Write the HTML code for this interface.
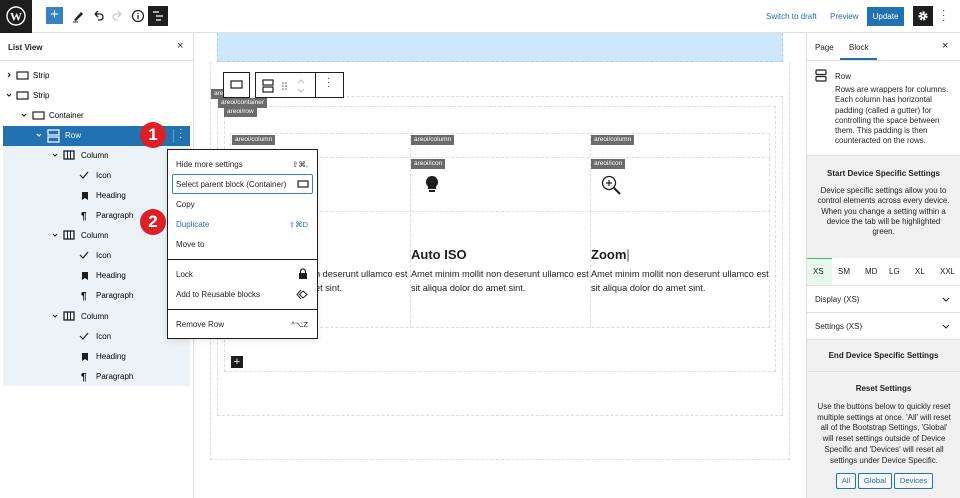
<!DOCTYPE html>
<html><head><meta charset="utf-8"><style>
*{box-sizing:border-box;margin:0;padding:0}
body{width:960px;height:498px;overflow:hidden;font-family:"Liberation Sans",Arial,sans-serif;background:#fff;position:relative;color:#1e1e1e}
.a{position:absolute}
.t{font-size:8px;white-space:nowrap}
.lab{position:absolute;background:#6b6b6b;color:#fff;font-size:6.5px;padding:1px 3px;line-height:8px}
.dash{position:absolute;border:1px dashed #ddd}
.mi{position:absolute;left:8px;font-size:8px;white-space:nowrap}
.ms{position:absolute;right:9px;font-size:7.5px}
</style></head><body>
<div class="a" style="left:0;top:0;width:960px;height:33px;border-bottom:1px solid #e0e0e0"></div>
<div class="a" style="left:0;top:0;width:32px;height:33px;background:#1e1e1e"></div>
<svg class="a" style="left:6px;top:6px" width="20" height="20" viewBox="0 0 20 20"><circle cx="10" cy="10" r="9" fill="none" stroke="#fff" stroke-width="1.4"/><text x="10" y="14.5" font-size="12" font-weight="bold" fill="#fff" text-anchor="middle" font-family="Liberation Serif">W</text></svg>
<div class="a" style="left:46px;top:7px;width:17px;height:17px;background:#3582c4;color:#fff;font-size:15px;line-height:16px;text-align:center">+</div>
<svg class="a" style="left:71px;top:9px" width="14" height="14"><path d="M3 11 L10 3 L12 5 L5 12Z" fill="#1e1e1e"/><path d="M2 13h5" stroke="#1e1e1e"/></svg>
<svg class="a" style="left:91px;top:9px" width="14" height="14"><path d="M4 5h5a3 3 0 010 6H7M4 5l3-3M4 5l3 3" stroke="#1e1e1e" fill="none" stroke-width="1.3"/></svg>
<svg class="a" style="left:111px;top:9px" width="14" height="14"><path d="M10 5H5a3 3 0 000 6h2M10 5L7 2M10 5L7 8" stroke="#ccc" fill="none" stroke-width="1.3"/></svg>
<svg class="a" style="left:131px;top:9px" width="14" height="14"><circle cx="7" cy="7" r="5.5" fill="none" stroke="#1e1e1e" stroke-width="1.2"/><path d="M7 6v4M7 4v1" stroke="#1e1e1e" stroke-width="1.3"/></svg>
<div class="a" style="left:148px;top:6px;width:20px;height:20px;background:#1e1e1e"></div>
<svg class="a" style="left:151px;top:9px" width="14" height="14"><path d="M2 3h6M5 7h7M5 11h5" stroke="#fff" stroke-width="1.3"/></svg>
<div class="a t" style="left:766px;top:12px;color:#2271b1">Switch to draft</div>
<div class="a t" style="left:830px;top:12px;color:#2271b1">Preview</div>
<div class="a" style="left:867px;top:7px;width:37px;height:19px;background:#2271b1;color:#fff;font-size:8px;line-height:19px;text-align:center">Update</div>
<div class="a" style="left:913px;top:6px;width:20px;height:20px;background:#1e1e1e"></div>
<svg class="a" style="left:917px;top:10px" width="12" height="12"><circle cx="6" cy="6" r="3.5" fill="none" stroke="#fff" stroke-width="2.2" stroke-dasharray="2 1.2"/><circle cx="6" cy="6" r="2.6" fill="#fff"/><circle cx="6" cy="6" r="1" fill="#1e1e1e"/></svg>
<div class="a" style="left:942px;top:8px;font-size:10px;line-height:5px;width:4px">·<br>·<br>·</div>

<div class="a" style="left:193px;top:33px;width:1px;height:465px;background:#e0e0e0"></div>
<div class="a" style="left:0;top:60px;width:193px;height:1px;background:#e0e0e0"></div>
<div class="a t" style="left:8px;top:43px;font-weight:bold">List View</div>
<div class="a" style="left:177px;top:40px;font-size:11px">×</div>
<div class="a" style="left:3px;top:146px;width:187px;height:240px;background:#ecf3f8"></div>
<div class="a" style="left:3px;top:126px;width:187px;height:20px;background:#2271b1"></div>
<div class="a" style="left:173px;top:129px;width:1px;height:14px;background:#5b9bd0"></div>
<div class="a" style="left:179px;top:128px;color:#fff;font-size:10px;line-height:4px">·<br>·<br>·</div>
<div class="a" style="left:140px;top:122px;width:26px;height:26px;border-radius:50%;background:#dd1f26;color:#fff;font-size:17px;font-weight:bold;text-align:center;line-height:26px">1</div>
<div class="a" style="left:140px;top:209px;width:26px;height:26px;border-radius:50%;background:#dd1f26;color:#fff;font-size:17px;font-weight:bold;text-align:center;line-height:26px">2</div>
<svg class="a" style="left:0;top:60px" width="193" height="330" font-family="Liberation Sans" font-size="8">
<g fill="none" stroke="#1e1e1e" stroke-width="1.2">
<path d="M8 13l2 2-2 2"/><rect x="17" y="12" width="11" height="7"/>
<path d="M7 34l2 2 2-2"/><rect x="17" y="32" width="11" height="7"/>
<path d="M22 54l2 2 2-2"/><rect x="33" y="52" width="11" height="7"/>
<path d="M37 74l2 2 2-2" stroke="#fff"/><rect x="48" y="70" width="11" height="5" stroke="#fff"/><rect x="48" y="77" width="11" height="5" stroke="#fff"/>
</g>
<text x="33" y="18">Strip</text><text x="33" y="38">Strip</text><text x="49" y="58">Container</text><text x="65" y="78" fill="#fff">Row</text>
<g id="col">
<path d="M53 94l2 2 2-2" fill="none" stroke="#1e1e1e"/><rect x="64" y="91" width="10" height="8" fill="none" stroke="#1e1e1e" stroke-width="1.3"/><path d="M67.5 91v8M70.5 91v8" stroke="#1e1e1e"/>
<text x="81" y="98">Column</text>
<path d="M80 115l3 3 5-6" fill="none" stroke="#1e1e1e" stroke-width="1.2"/><text x="96" y="118">Icon</text>
<path d="M82 132h6v8l-3-2-3 2z" fill="#1e1e1e"/><text x="96" y="138">Heading</text>
<text x="81" y="159" font-size="10" font-weight="bold">¶</text><text x="96" y="158">Paragraph</text>
</g>
<use href="#col" y="80"/><use href="#col" y="161"/>
</svg>

<div class="a" style="left:217px;top:33px;width:566px;height:29px;background:#cfe7fb;border:1px dashed #a7d0f0;border-top:none"></div>
<div class="dash" style="left:210px;top:62px;width:580px;height:398px;border-top:none"></div>
<div class="dash" style="left:217px;top:96px;width:566px;height:320px"></div>
<div class="dash" style="left:224px;top:106px;width:552px;height:266px"></div>
<div class="dash" style="left:230px;top:133px;width:540px;height:195px"></div>
<div class="dash" style="left:230px;top:157px;width:540px;height:55px;border-left:none;border-right:none"></div>
<div class="a" style="left:410px;top:133px;width:0;height:195px;border-left:1px dashed #ddd"></div>
<div class="a" style="left:590px;top:133px;width:0;height:195px;border-left:1px dashed #ddd"></div>
<div class="lab" style="left:211px;top:89px">areo</div>
<div class="lab" style="left:218px;top:98px">areoi/container</div>
<div class="lab" style="left:224px;top:107px">areoi/row</div>
<div class="lab" style="left:232px;top:135px">areoi/column</div>
<div class="lab" style="left:411px;top:135px">areoi/column</div>
<div class="lab" style="left:591px;top:135px">areoi/column</div>
<div class="lab" style="left:411px;top:159px">areoi/icon</div>
<div class="lab" style="left:591px;top:159px">areoi/icon</div>
<svg class="a" style="left:424px;top:175px" width="16" height="20"><path d="M8 1a6 6 0 00-4 10.5V14h8v-2.5A6 6 0 008 1z" fill="#1e1e1e"/><rect x="5" y="15" width="6" height="2" fill="#1e1e1e"/></svg>
<svg class="a" style="left:600px;top:174px" width="22" height="22"><circle cx="9" cy="9" r="6.5" fill="none" stroke="#1e1e1e" stroke-width="1.3"/><path d="M9 6v6M6 9h6" stroke="#1e1e1e" stroke-width="1.2"/><path d="M14 14l6 6" stroke="#1e1e1e" stroke-width="2"/></svg>
<div class="a" style="left:411px;top:247px;font-size:13px;font-weight:bold">Auto ISO</div>
<div class="a" style="left:591px;top:247px;font-size:13px;font-weight:bold">Zoom<span style="font-weight:normal;color:#555">|</span></div>
<div class="a" style="left:411px;top:267px;font-size:9.2px;line-height:14px;width:180px">Amet minim mollit non deserunt ullamco est sit aliqua dolor do amet sint.</div>
<div class="a" style="left:591px;top:267px;font-size:9.2px;line-height:14px;width:180px">Amet minim mollit non deserunt ullamco est sit aliqua dolor do amet sint.</div>
<div class="a" style="left:315px;top:267px;font-size:9.2px;line-height:14px;white-space:nowrap">n deserunt ullamco est<br>et sint.</div>
<div class="a" style="left:231px;top:356px;width:12px;height:12px;background:#1e1e1e;color:#fff;font-size:11px;line-height:12px;text-align:center">+</div>

<div class="a" style="left:223px;top:72px;width:27px;height:26px;border:1px solid #1e1e1e;background:#fff"></div>
<svg class="a" style="left:230px;top:80px" width="14" height="10"><rect x="1" y="1" width="11" height="7" fill="none" stroke="#1e1e1e" stroke-width="1.2"/></svg>
<div class="a" style="left:255px;top:72px;width:89px;height:26px;border:1px solid #1e1e1e;background:#fff"></div>
<div class="a" style="left:315px;top:73px;width:1px;height:24px;background:#1e1e1e"></div>
<svg class="a" style="left:262px;top:78px" width="60" height="16"><rect x="1" y="2" width="10" height="5" fill="none" stroke="#1e1e1e" stroke-width="1.2"/><rect x="1" y="9" width="10" height="5" fill="none" stroke="#1e1e1e" stroke-width="1.2"/><g fill="#555"><circle cx="21" cy="5" r=".8"/><circle cx="24" cy="5" r=".8"/><circle cx="21" cy="8" r=".8"/><circle cx="24" cy="8" r=".8"/><circle cx="21" cy="11" r=".8"/><circle cx="24" cy="11" r=".8"/></g><path d="M36 5l3-3 3 3M36 11l3 3 3-3" fill="none" stroke="#bbb"/></svg>
<div class="a" style="left:327px;top:77px;font-size:10px;line-height:4px">·<br>·<br>·</div>

<div class="a" style="left:167px;top:149px;width:151px;height:190px;border:1px solid #1e1e1e;background:#fff;box-shadow:0 2px 6px rgba(0,0,0,.1)">
<div class="mi" style="top:10px">Hide more settings</div><div class="ms" style="top:10px">⇧⌘,</div>
<div class="a" style="left:4px;top:24px;width:141px;height:20px;border:1.3px solid #3582c4;border-radius:2px"></div>
<div class="mi" style="top:30px">Select parent block (Container)</div>
<svg class="a" style="left:129px;top:30px" width="12" height="9"><rect x="1" y="1" width="10" height="6" fill="none" stroke="#1e1e1e" stroke-width="1.2"/></svg>
<div class="mi" style="top:50px">Copy</div>
<div class="mi" style="top:70px;color:#2271b1">Duplicate</div><div class="ms" style="top:70px;color:#2271b1">⇧⌘D</div>
<div class="mi" style="top:90px">Move to</div>
<div class="a" style="left:0;top:109px;width:149px;height:1px;background:#1e1e1e"></div>
<div class="mi" style="top:120px">Lock</div>
<svg class="a" style="left:130px;top:118px" width="10" height="12"><path d="M2.5 5V3.5a2.5 2.5 0 015 0V5" fill="none" stroke="#1e1e1e" stroke-width="1.2"/><rect x="1" y="5" width="8" height="6" fill="#1e1e1e"/></svg>
<div class="mi" style="top:140px">Add to Reusable blocks</div>
<svg class="a" style="left:128px;top:139px" width="13" height="11"><path d="M5 1L1 5.5 5 10M7 2l4 3.5-4 3.5-3.5-3.5z" fill="none" stroke="#1e1e1e"/></svg>
<div class="a" style="left:0;top:159px;width:149px;height:1px;background:#1e1e1e"></div>
<div class="mi" style="top:170px">Remove Row</div><div class="ms" style="top:170px">^⌥Z</div>
</div>

<div class="a" style="left:806px;top:33px;width:1px;height:465px;background:#e0e0e0"></div>
<div class="a" style="left:807px;top:60px;width:153px;height:1px;background:#e0e0e0"></div>
<div class="a t" style="left:815px;top:43px">Page</div>
<div class="a t" style="left:849px;top:43px">Block</div>
<div class="a" style="left:840px;top:58px;width:37px;height:2px;background:#2271b1"></div>
<div class="a" style="left:942px;top:40px;font-size:11px">×</div>
<svg class="a" style="left:815px;top:69px" width="12" height="13"><rect x="1" y="1" width="10" height="4.5" rx="1" fill="none" stroke="#1e1e1e" stroke-width="1.2"/><rect x="1" y="7.5" width="10" height="4.5" rx="1" fill="none" stroke="#1e1e1e" stroke-width="1.2"/></svg>
<div class="a t" style="left:835px;top:72px">Row</div>
<div class="a" style="left:835px;top:85px;font-size:7.9px;line-height:10.3px;width:120px;color:#1e1e1e">Rows are wrappers for columns. Each column has horizontal padding (called a gutter) for controlling the space between them. This padding is then counteracted on the rows.</div>
<div class="a" style="left:807px;top:155px;width:153px;height:103px;background:#f0f0f0;border-top:1px solid #e0e0e0"></div>
<div class="a t" style="left:807px;top:169px;width:153px;text-align:center;font-weight:bold">Start Device Specific Settings</div>
<div class="a" style="left:815px;top:186px;width:137px;text-align:center;font-size:7.9px;line-height:10.3px">Device specific settings allow you to control elements across every device. When you change a setting within a device the tab will be highlighted green.</div>
<div class="a" style="left:807px;top:258px;width:153px;height:28px;border-bottom:1px solid #e0e0e0"></div>
<div class="a" style="left:807px;top:258px;width:25px;height:27px;background:#e8f8ef;border-top:1px solid #4ab866"></div>
<div class="a t" style="left:813px;top:267px">XS</div><div class="a t" style="left:838px;top:267px">SM</div><div class="a t" style="left:865px;top:267px">MD</div><div class="a t" style="left:889px;top:267px">LG</div><div class="a t" style="left:915px;top:267px">XL</div><div class="a t" style="left:940px;top:267px">XXL</div>
<div class="a" style="left:807px;top:286px;width:153px;height:27px;border-bottom:1px solid #e0e0e0"></div>
<div class="a t" style="left:815px;top:295px">Display (XS)</div>
<div class="a t" style="left:815px;top:322px">Settings (XS)</div>
<svg class="a" style="left:942px;top:296px" width="8" height="40"><path d="M1 2l3 3 3-3M1 29l3 3 3-3" fill="none" stroke="#1e1e1e"/></svg>
<div class="a" style="left:807px;top:339px;width:153px;height:159px;background:#f0f0f0;border-top:1px solid #e0e0e0"></div>
<div class="a" style="left:807px;top:371px;width:153px;height:1px;background:#e0e0e0"></div>
<div class="a t" style="left:807px;top:351px;width:153px;text-align:center;font-weight:bold">End Device Specific Settings</div>
<div class="a t" style="left:807px;top:384px;width:153px;text-align:center;font-weight:bold">Reset Settings</div>
<div class="a" style="left:815px;top:402px;width:138px;text-align:center;font-size:7.9px;line-height:10.7px">Use the buttons below to quickly reset multiple settings at once. 'All' will reset all of the Bootstrap Settings, 'Global' will reset settings outside of Device Specific and 'Devices' will reset all settings under Device Specific.</div>
<div class="a" style="left:836px;top:473px;width:20px;height:16px;border:1px solid #2271b1;border-radius:2px;background:#f6f7f7;color:#2271b1;font-size:7.7px;line-height:14px;text-align:center">All</div>
<div class="a" style="left:858px;top:473px;width:34px;height:16px;border:1px solid #2271b1;border-radius:2px;background:#f6f7f7;color:#2271b1;font-size:7.7px;line-height:14px;text-align:center">Global</div>
<div class="a" style="left:894px;top:473px;width:39px;height:16px;border:1px solid #2271b1;border-radius:2px;background:#f6f7f7;color:#2271b1;font-size:7.7px;line-height:14px;text-align:center">Devices</div>
</body></html>
